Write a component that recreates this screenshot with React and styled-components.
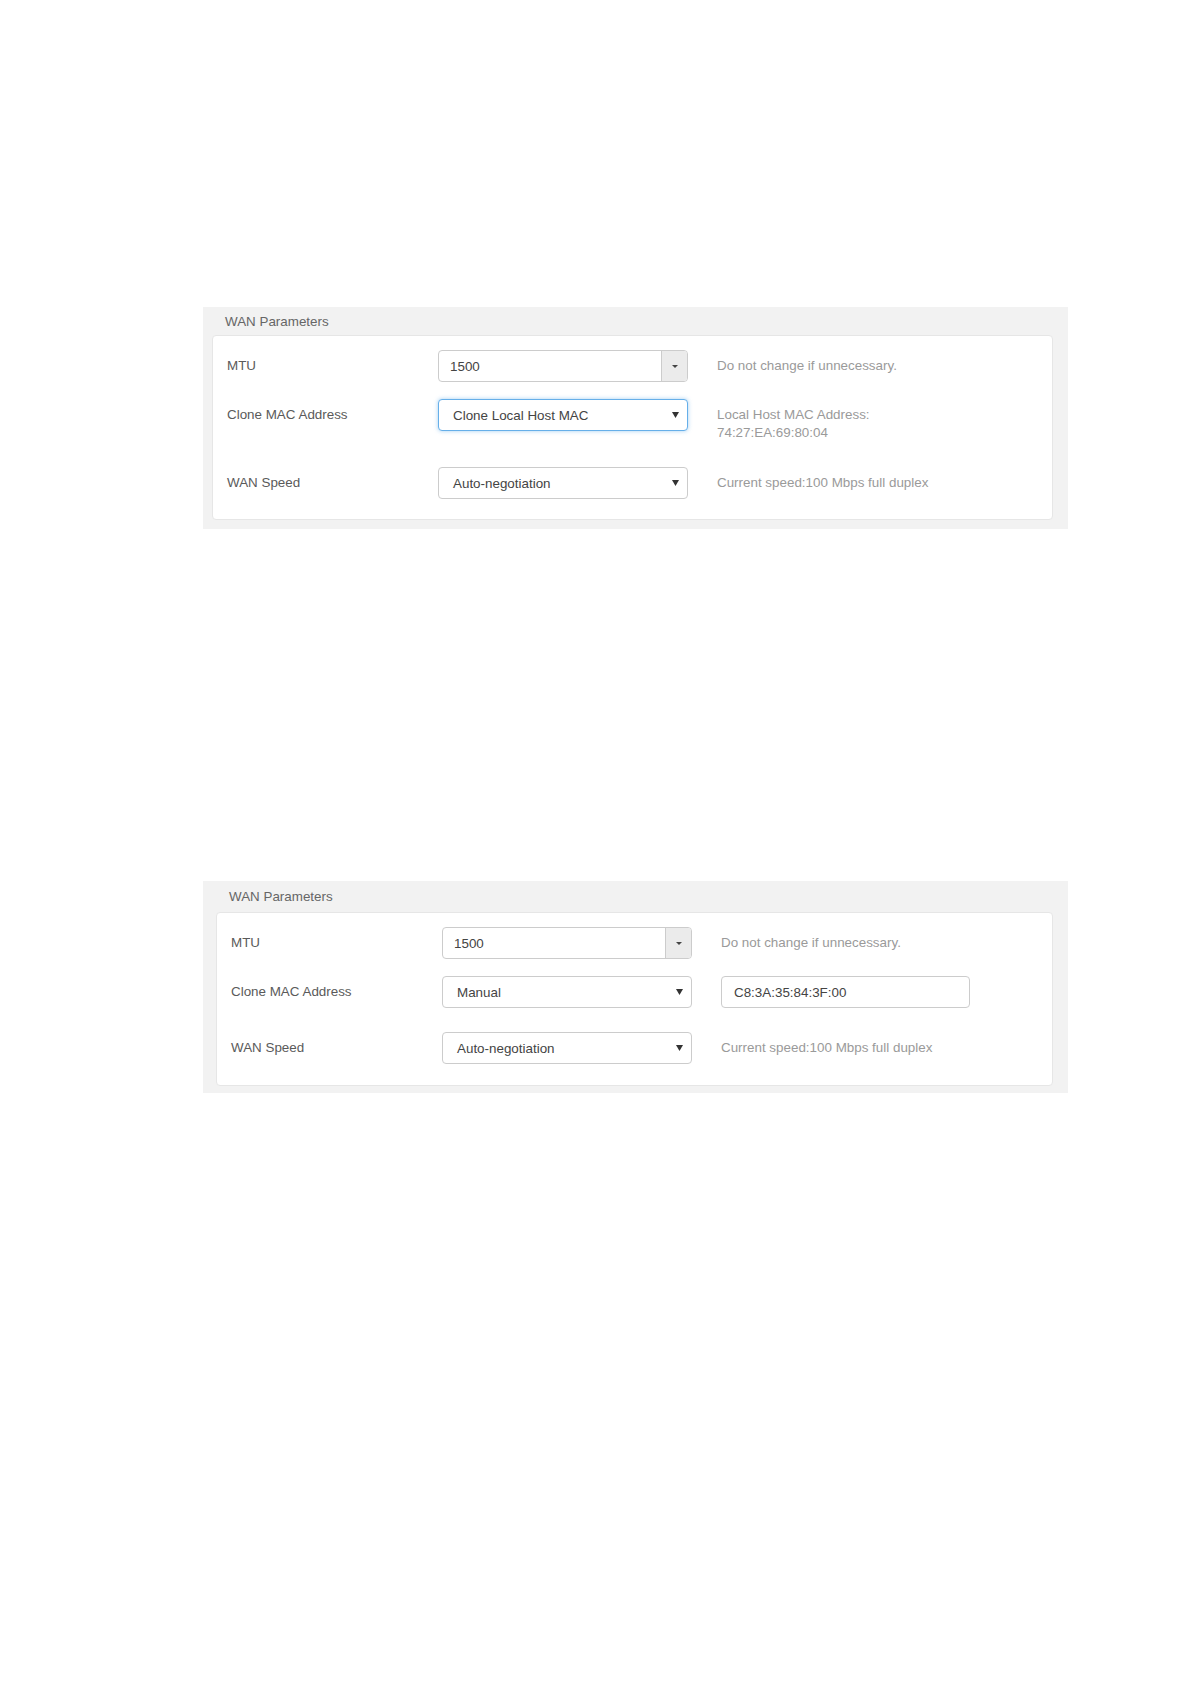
import React from "react";
import styled, { createGlobalStyle, css } from "styled-components";

const Global = createGlobalStyle`
  html, body { margin: 0; padding: 0; background: #ffffff; }
  body { font-family: "Liberation Sans", Arial, sans-serif; }
  * { box-sizing: border-box; }
`;

const Page = styled.div`
  width: 1191px;
  min-height: 1684px;
  padding: 307px 0 0 203px;
  display: flex;
  flex-direction: column;
  gap: 352px;
`;

const Panel = styled.section`
  width: 865px;
  background: #f2f2f2;
  padding: 0 15px ${(p) => p.$bottom}px ${(p) => p.$inset}px;
  display: flex;
  flex-direction: column;
`;

const PanelTitle = styled.div`
  height: ${(p) => p.$height}px;
  display: flex;
  align-items: center;
  padding-left: 13px;
  font-size: 13.4px;
  color: #666;
`;

const PanelBody = styled.div`
  background: #fff;
  border: 1px solid #e6e6e6;
  border-radius: 4px;
  padding: 14px 0 ${(p) => p.$bottom}px 14px;
  display: flex;
  flex-direction: column;
`;

const Row = styled.div`
  display: grid;
  grid-template-columns: 182px 250px 1fr;
  column-gap: 29px;
  align-items: start;
  margin-bottom: ${(p) => p.$after || 0}px;
`;

const Label = styled.div`
  line-height: 32px;
  font-size: 13.4px;
  color: #5a5a5a;
`;

const Hint = styled.div`
  padding-top: 7px;
  line-height: 18px;
  font-size: 13.4px;
  color: #9a9a9a;
`;

const controlBase = css`
  height: 32px;
  border: 1px solid #ccc;
  border-radius: 4px;
  background: #fff;
  font-size: 13.4px;
  color: #444;
  display: flex;
  align-items: center;
`;

const SpinBox = styled.div`
  ${controlBase};
  overflow: hidden;
`;

const SpinValue = styled.span`
  flex: 1;
  padding-left: 11px;
`;

const SpinButton = styled.span`
  width: 26px;
  height: 100%;
  background: #ebebeb;
  border-left: 1px solid #ccc;
  display: flex;
  align-items: center;
  justify-content: center;
`;

const SelectBox = styled.div`
  ${controlBase};
  padding: 0 8px 0 14px;
  justify-content: space-between;
  ${(p) =>
    p.$focused &&
    css`
      border-color: #66afe9;
      box-shadow: 0 0 4px rgba(102, 175, 233, 0.6);
    `}
`;

const TextBox = styled.div`
  ${controlBase};
  width: 249px;
  padding-left: 12px;
`;

const Caret = ({ w = 7, h = 6, color = "#333" }) => (
  <svg width={w} height={h} viewBox={`0 0 ${w} ${h}`}>
    <polygon points={`0,0 ${w},0 ${w / 2},${h}`} fill={color} />
  </svg>
);

const MtuRow = () => (
  <Row $after={17}>
    <Label>MTU</Label>
    <SpinBox>
      <SpinValue>1500</SpinValue>
      <SpinButton>
        <Caret w={6} h={3} color="#444" />
      </SpinButton>
    </SpinBox>
    <Hint>Do not change if unnecessary.</Hint>
  </Row>
);

const SpeedRow = () => (
  <Row>
    <Label>WAN Speed</Label>
    <SelectBox>
      <span>Auto-negotiation</span>
      <Caret />
    </SelectBox>
    <Hint>Current speed:100 Mbps full duplex</Hint>
  </Row>
);

export default function App() {
  return (
    <>
      <Global />
      <Page>
        <Panel $inset={9} $bottom={9}>
          <PanelTitle $height={28}>WAN Parameters</PanelTitle>
          <PanelBody $bottom={20}>
            <MtuRow />
            <Row $after={25}>
              <Label>Clone MAC Address</Label>
              <SelectBox $focused>
                <span>Clone Local Host MAC</span>
                <Caret />
              </SelectBox>
              <Hint>
                Local Host MAC Address:
                <br />
                74:27:EA:69:80:04
              </Hint>
            </Row>
            <SpeedRow />
          </PanelBody>
        </Panel>

        <Panel $inset={13} $bottom={7}>
          <PanelTitle $height={31}>WAN Parameters</PanelTitle>
          <PanelBody $bottom={21}>
            <MtuRow />
            <Row $after={24}>
              <Label>Clone MAC Address</Label>
              <SelectBox>
                <span>Manual</span>
                <Caret />
              </SelectBox>
              <TextBox>C8:3A:35:84:3F:00</TextBox>
            </Row>
            <SpeedRow />
          </PanelBody>
        </Panel>
      </Page>
    </>
  );
}
